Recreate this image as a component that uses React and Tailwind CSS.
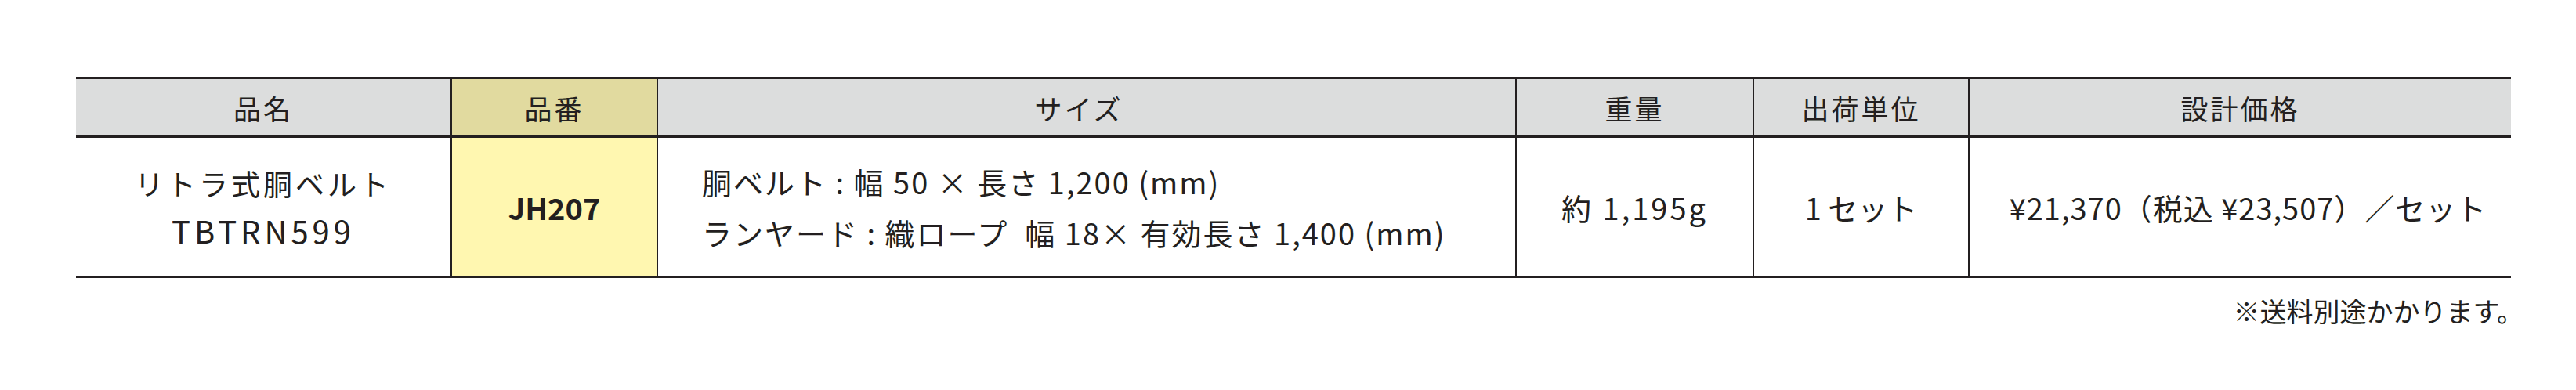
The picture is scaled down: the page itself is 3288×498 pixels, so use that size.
const cols = "grid grid-cols-[478px_263px_1096px_303px_275px_693px]";

function HeadCell({ children, className = "" }) {
  return (
    <div className={`flex h-[72px] items-center justify-center ${className}`}>
      <span className="tracking-[3px]">{children}</span>
    </div>
  );
}

function BodyCell({ children, className = "" }) {
  return <div className={`flex h-[176px] items-center ${className}`}>{children}</div>;
}

export default function App() {
  return (
    <div className="min-h-[498px] bg-white pt-[98px] pl-[97px] font-['Noto_Sans_CJK_JP',sans-serif] text-[#231f20]">
      <div className="w-[3108px]">
        <div className="border-y-[3px] border-[#231f20]">
          <div className={`${cols} bg-[#dcdddd] text-[35px] leading-none`}>
            <HeadCell>品名</HeadCell>
            <HeadCell className="border-l-2 border-[#231f20] bg-[#e1da9f]">品番</HeadCell>
            <HeadCell className="border-l-2 border-[#231f20] pr-[20px]">サイズ</HeadCell>
            <HeadCell className="border-l-2 border-[#231f20]">重量</HeadCell>
            <HeadCell className="border-l-2 border-[#231f20]">出荷単位</HeadCell>
            <HeadCell className="border-l-2 border-[#231f20]">設計価格</HeadCell>
          </div>
          <div className={`${cols} border-t-[3px] border-[#231f20] text-[38px]`}>
            <BodyCell className="flex-col justify-center leading-[60px]">
              <span className="text-[37px] tracking-[4px]">リトラ式胴ベルト</span>
              <span className="text-[40px] tracking-[5px]">TBTRN599</span>
            </BodyCell>
            <BodyCell className="justify-center border-l-2 border-[#231f20] bg-[#fff7b0]">
              <span className="text-[38px] font-bold">JH207</span>
            </BodyCell>
            <BodyCell className="flex-col items-start justify-center border-l-2 border-[#231f20] pl-[56px] leading-[65px] tracking-[2px]">
              <span>胴ベルト : 幅 50 × 長さ 1,200 (mm)</span>
              <span>ランヤード : 織ロープ{"\u2002"}幅 18× 有効長さ 1,400 (mm)</span>
            </BodyCell>
            <BodyCell className="justify-center border-l-2 border-[#231f20]">
              <span className="tracking-[3px]">約 1,195g</span>
            </BodyCell>
            <BodyCell className="justify-center border-l-2 border-[#231f20]">
              <span>1 セット</span>
            </BodyCell>
            <BodyCell className="justify-center border-l-2 border-[#231f20] pl-[20px]">
              <span className="tracking-[1px]">¥21,370（税込 ¥23,507）／セット</span>
            </BodyCell>
          </div>
        </div>
        <p className="-mr-[16px] mt-[16px] text-right text-[34px] leading-[51px]">※送料別途かかります。</p>
      </div>
    </div>
  );
}
